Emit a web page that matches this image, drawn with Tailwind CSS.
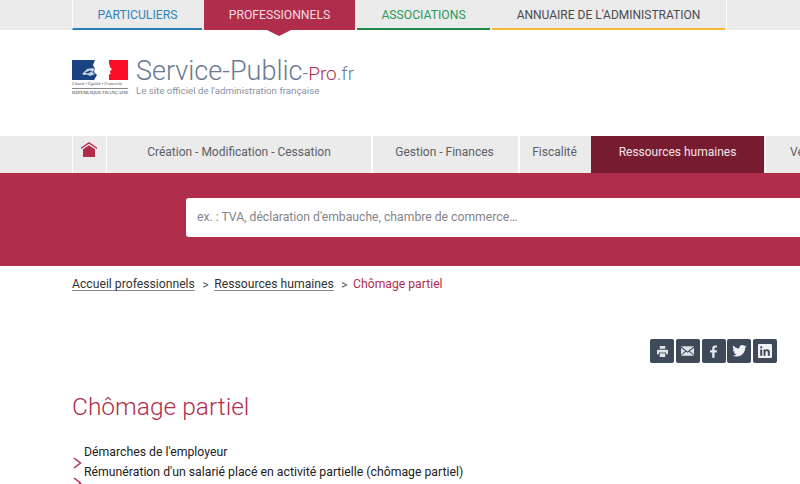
<!DOCTYPE html>
<html lang="fr">
<head>
    <meta charset="UTF-8">
    <title>Chômage partiel - Service-Public-Pro.fr</title>
    <script src="https://cdn.jsdelivr.net/npm/@tailwindcss/browser@4"></script>
</head>
<body class="bg-white h-[484px] w-[800px] overflow-hidden font-['Roboto',sans-serif]">

    <!-- Onglets du haut -->
    <div class="flex h-[30px] bg-[#ebebeb] pl-[72px] text-[12.2px] leading-[30px] text-center">
        <a class="w-[130px] border-l border-white h-[30px] border-b-[2px] border-b-[#2a7fb8] text-[#2f86bd]">PARTICULIERS</a>
        <div class="relative w-[151px] ml-[2px] bg-[#b02e4c] text-[#f3dbe1]">PROFESSIONNELS
            <span class="absolute left-[63px] top-[30px] border-x-[12px] border-x-transparent border-t-[6px] border-t-[#b02e4c]"></span>
        </div>
        <a class="w-[133px] ml-[2px] h-[30px] border-b-[2px] border-b-[#1f8a46] text-[#2a9a5e]">ASSOCIATIONS</a>
        <a class="w-[233px] ml-[2px] h-[30px] border-b-[2px] border-b-[#f5b82e] text-[#4a4a52] text-[12px]">ANNUAIRE DE L'ADMINISTRATION</a>
        <div class="flex-1 ml-[1px] border-l border-white"></div>
    </div>

    <!-- Logo -->
    <div class="flex h-[106px] pl-[72px] pt-[30px]">
        <div class="w-[57px]">
            <svg width="56" height="20" viewBox="0 0 56 20" class="block">
                <rect width="25" height="20" fill="#1b4283"/>
                <rect x="37" width="19" height="20" fill="#fb0f26"/>
                <path d="M23 0h14v3l1 4 2 2.500-2 1.500.5 3-3 1-1.500 3-1 2H22l3-5-3-3 1-3-2-4z" fill="#fff"/>
                <path d="M10 14l5-5 6-1 2 2-3 2 3 2-5 2-3-1.500-3 .5z" fill="#c9d3e3"/>
                <path d="M13 12.500l5-2 2 .8-4 2.200z" fill="#1b4283"/>
            </svg>
            <div class="mt-[1px] w-[56px] h-[8px] border-b border-[#888] text-[4.300px] leading-[6px] italic text-[#555] font-['Liberation_Serif',serif] whitespace-nowrap overflow-hidden">Liberté • Égalité • Fraternité</div>
            <div class="mt-[1px] text-[4.700px] leading-[6px] text-[#333] font-['Liberation_Serif',serif] whitespace-nowrap">RÉPUBLIQUE FRANÇAISE</div>
        </div>
        <div class="ml-[7px] -mt-[1px]">
            <div class="text-[27px] leading-[24px] font-light text-[#6a7a94] whitespace-nowrap">Service-Public<span class="text-[20px]">-</span><span class="text-[19px] text-[#b02e4c]">Pro</span><span class="text-[19px] font-light">.fr</span></div>
            <div class="text-[9.700px] leading-[12px] -mt-[1px] text-[#8a93a3] whitespace-nowrap">Le site officiel de l'administration française</div>
        </div>
    </div>

    <!-- Menu principal -->
    <div class="flex h-[37px] bg-[#ebebeb] pl-[72px] text-[12px] leading-[32px] text-center text-[#5b6068] whitespace-nowrap overflow-hidden">
        <div class="w-[35px] shrink-0 border-x-[1px] border-white flex justify-center pt-[6px] pr-px">
            <svg width="16" height="15" viewBox="0 0 16 15"><path d="M8 0L16 5.500V7L8 1.800 0 7V5.500z" fill="#b02e4c"/><path d="M8 3.300L14 7.300V15H2V7.300z" fill="#b02e4c"/></svg>
        </div>
        <a class="w-[264px] shrink-0">Création - Modification - Cessation</a>
        <a class="w-[147px] shrink-0 border-l-[2px] border-white pr-[2px]">Gestion - Finances</a>
        <a class="w-[73px] shrink-0 border-l-[2px] border-white pr-[2px]">Fiscalité</a>
        <a class="w-[173px] shrink-0 bg-[#771c30] text-[#f3e4e8]">Ressources humaines</a>
        <a class="shrink-0 ml-[1px] pl-[24px] border-l-[1px] border-white">Vente - Commerce</a>
    </div>

    <!-- Recherche -->
    <div class="h-[93px] bg-[#b02e4c] pl-[186px] pt-[25px]">
        <div class="h-[39px] bg-white rounded-l-[3px] pl-[11px] text-[12.200px] leading-[38px] text-[#84848a]">ex. : TVA, déclaration d'embauche, chambre de commerce…</div>
    </div>

    <!-- Fil d'ariane -->
    <div class="flex items-center pl-[72px] mt-[10px] h-[17px] text-[12.200px] whitespace-nowrap">
        <a class="text-[#333] underline underline-offset-2 decoration-[#888]">Accueil professionnels</a>
        <span class="ml-[7.500px] mr-[5.500px] text-[#555] text-[12px]">&gt;</span>
        <a class="text-[#333] underline underline-offset-2 decoration-[#888]">Ressources humaines</a>
        <span class="ml-[7.500px] mr-[5.500px] text-[#555] text-[12px]">&gt;</span>
        <span class="text-[#b02e4c]">Chômage partiel</span>
    </div>

    <!-- Partage -->
    <div class="flex justify-end gap-[1.750px] pr-[23px] mt-[46px]">
        <a class="w-[24px] h-[24px] bg-[#3e4a59] rounded-[2px] flex items-center justify-center">
            <svg width="11" height="11" viewBox="0 0 12 12" fill="#dfe3e8"><path d="M3 0h6v3H3zM1 4h10a1 1 0 0 1 1 1v4h-2V7H2v2H0V5a1 1 0 0 1 1-1z"/><path d="M3 8h6v4H3z"/></svg>
        </a>
        <a class="w-[24px] h-[24px] bg-[#3e4a59] rounded-[2px] flex items-center justify-center">
            <svg width="13" height="10" viewBox="0 0 14 10" fill="#dfe3e8"><path d="M0 0h14L7 5.500z"/><path d="M0 1.500L4.500 5 0 9zM14 1.500L9.500 5 14 9zM5.300 5.700L7 7l1.700-1.300L14 10H0z"/></svg>
        </a>
        <a class="w-[24px] h-[24px] bg-[#3e4a59] rounded-[2px] flex items-center justify-center">
            <svg width="7" height="13" viewBox="0 0 8 14" fill="#e8ebee"><path d="M2.500 14V8H0V5.500h2.500V3.500C2.500 1.200 3.800 0 5.800 0H8v2.500H6.500c-1 0-1.300.5-1.300 1.200v1.800H8L7.600 8H5.200v6z"/></svg>
        </a>
        <a class="w-[24px] h-[24px] bg-[#3e4a59] rounded-[2px] flex items-center justify-center">
            <svg width="15" height="12" viewBox="0 0 24 20" fill="#f0f2f4"><path d="M24 2.400c-.9.400-1.800.7-2.800.8 1-.6 1.800-1.600 2.200-2.700-1 .6-2 1-3.100 1.200C19.300.7 18 0 16.600 0c-2.700 0-4.900 2.200-4.900 4.900 0 .4 0 .8.100 1.100C7.700 5.800 4.100 3.900 1.700.9c-.4.700-.7 1.600-.7 2.500 0 1.700.9 3.200 2.200 4.100-.8 0-1.600-.2-2.200-.6v.1c0 2.400 1.700 4.400 3.900 4.800-.4.100-.8.200-1.300.2-.3 0-.6 0-.9-.1.600 2 2.400 3.400 4.600 3.400-1.700 1.300-3.800 2.100-6.100 2.100-.4 0-.8 0-1.200-.1C2.200 18.200 4.800 19 7.500 19c9.100 0 14-7.500 14-14v-.6c1-.7 1.800-1.500 2.500-2z"/></svg>
        </a>
        <a class="w-[24px] h-[24px] bg-[#3e4a59] rounded-[2px] flex items-center justify-center">
            <svg width="14" height="14" viewBox="0 0 14 14"><path fill-rule="evenodd" fill="#f0f2f4" d="M1 0h12a1 1 0 0 1 1 1v12a1 1 0 0 1-1 1H1a1 1 0 0 1-1-1V1a1 1 0 0 1 1-1zM2.200 5.400v6.400h2V5.400zM3.200 2.200a1.150 1.150 0 1 0 0 2.300 1.150 1.150 0 0 0 0-2.300zM5.500 5.400v6.400h2V8.500c0-1 .5-1.500 1.200-1.500s1.100.5 1.100 1.500v3.300h2V8c0-1.900-1-2.800-2.400-2.800-1 0-1.600.5-1.900 1V5.400z"/></svg>
        </a>
    </div>

    <!-- Contenu -->
    <h1 class="pl-[72px] mt-[27px] text-[24.500px] leading-[34px] font-light text-[#b02e4c]">Chômage partiel</h1>
    <ul class="pl-[72px] mt-[18px] text-[12.250px] leading-[20px] text-[#222]">
        <li class="relative pl-[12px]">Démarches de l'employeur
            <svg class="absolute left-[1px] top-[15px]" width="9" height="12" viewBox="0 0 9 12" fill="none" stroke="#b02e4c" stroke-width="1.500"><path d="M1 1l6.500 5L1 11"/></svg>
        </li>
        <li class="relative pl-[12px]">Rémunération d'un salarié placé en activité partielle (chômage partiel)
            <svg class="absolute left-[1px] top-[15px]" width="9" height="12" viewBox="0 0 9 12" fill="none" stroke="#b02e4c" stroke-width="1.500"><path d="M1 1l6.500 5L1 11"/></svg>
        </li>
    </ul>

</body>
</html>
